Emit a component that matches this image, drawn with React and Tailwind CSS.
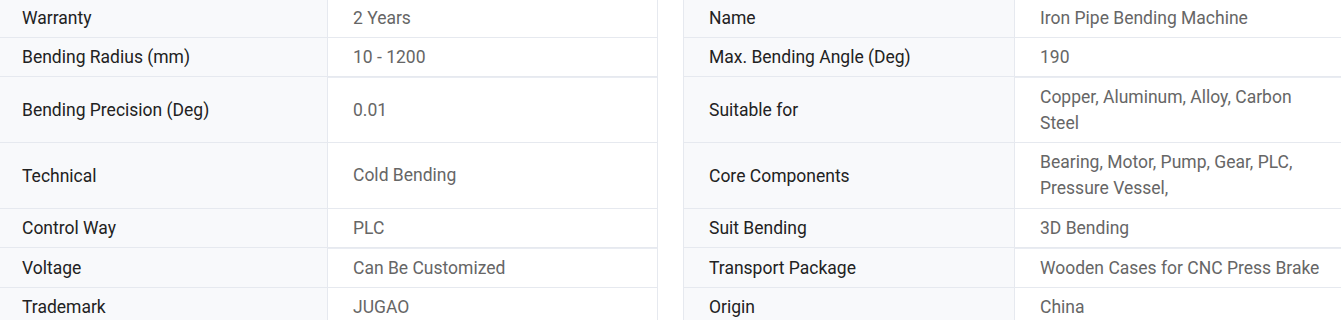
export default function App() {
  const rows = [
    [["Warranty", "2 Years"], ["Name", "Iron Pipe Bending Machine"]],
    [["Bending Radius (mm)", "10 - 1200"], ["Max. Bending Angle (Deg)", "190"]],
    [["Bending Precision (Deg)", "0.01"], ["Suitable for", "Copper, Aluminum, Alloy, Carbon Steel"], true],
    [["Technical", "Cold Bending"], ["Core Components", "Bearing, Motor, Pump, Gear, PLC, Pressure Vessel,"], false, true],
    [["Control Way", "PLC"], ["Suit Bending", "3D Bending"]],
    [["Voltage", "Can Be Customized"], ["Transport Package", "Wooden Cases for CNC Press Brake"], true],
    [["Trademark", "JUGAO"], ["Origin", "China"]],
  ];
  const Half = ({ pair, first, topLine, tall }) => (
    <div
      className={
        "flex border-b border-[#e6e9ef] " +
        (first ? "w-[658px] shrink-0 border-r" : "flex-1 min-w-0 border-l")
      }
    >
      <div
        className={
          (first ? "w-[328px] pl-[22px]" : "w-[331px] pl-[25px]") +
          " shrink-0 flex items-center bg-[#f8f9fb] border-r border-[#e6e9ef] text-[#222222] py-[6px]"
        }
      >
        {pair[0]}
      </div>
      <div
        className={
          "flex-1 min-w-0 flex items-center text-[#666666] pt-[6px] pl-[25px] pr-[16px] " +
          (tall ? "pb-[7px] " : "pb-[6px] ") +
          (topLine ? "border-t border-[#e9ecf2]" : "")
        }
      >
        {pair[1]}
      </div>
    </div>
  );
  return (
    <div
      className="w-[1341px] h-[320px] overflow-hidden bg-white text-[17.5px] leading-[26px]"
      style={{ fontFamily: "Roboto, 'Liberation Sans', sans-serif" }}
    >
      <div className="flex flex-col -mt-px">
        {rows.map(([l, r, topLine, tall], i) => (
          <div key={i} className="flex gap-[25px]">
            <Half pair={l} first topLine={topLine} tall={tall} />
            <Half pair={r} topLine={topLine} tall={tall} />
          </div>
        ))}
      </div>
    </div>
  );
}
